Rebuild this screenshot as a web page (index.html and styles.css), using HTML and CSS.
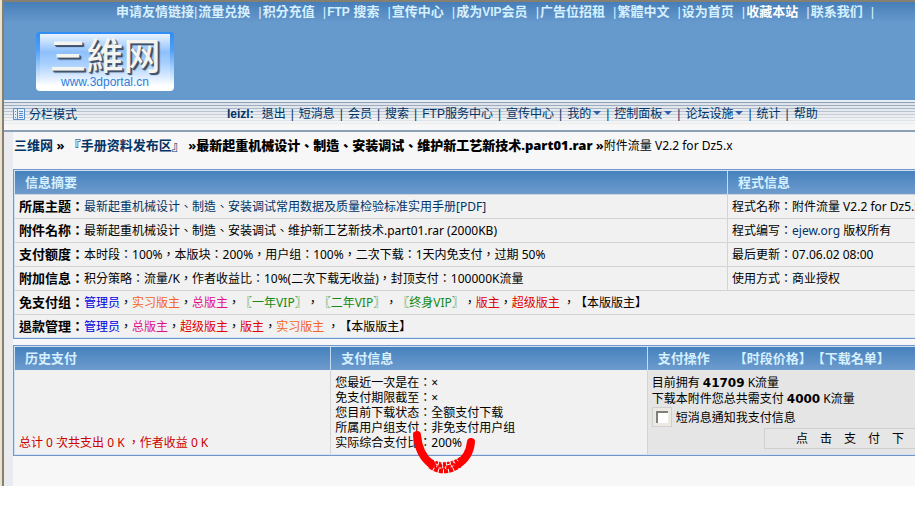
FILE: index.html
```html
<!DOCTYPE html>
<html lang="zh-Hant">
<head>
	<meta charset="UTF-8">
	<title>三维网 - 附件流量</title>
	<link rel="stylesheet" href="styles.css">
</head>
<body>
<div id="page">
	<div id="header">
		<ul class="topnav">
			<li><a class="tight" href="#">申请友情链接</a>|</li>
			<li><a href="#">流量兑换</a>|</li>
			<li><a href="#">积分充值</a>|</li>
			<li><a href="#"><span>FTP</span> 搜索</a>|</li>
			<li><a href="#">宣传中心</a>|</li>
			<li><a href="#">成为<span>VIP</span>会员</a>|</li>
			<li><a href="#">广告位招租</a>|</li>
			<li><a href="#">繁體中文</a>|</li>
			<li><a href="#">设为首页</a>|</li>
			<li><a class="on" href="#">收藏本站</a>|</li>
			<li><a href="#">联系我们</a>|</li>
		</ul>
		<a class="logo" href="#">
			<span class="logo-name">三維网</span>
			<span class="logo-url">www.3dportal.cn</span>
		</a>
	</div>
	<div id="menu">
		<a class="mode" href="#">
			<svg width="12" height="12" viewBox="0 0 12 12">
				<path d="M0.5 0.5h11v11h-11z" fill="#e4eefa" stroke="#5c8fca"/>
				<path d="M4.5 0v12" stroke="#5c8fca"/>
				<path d="M2 3.5h1M2 6.5h1M2 9.5h1M6 3.5h4M6 5.5h4M6 7.5h4M6 9.5h4" stroke="#5c8fca"/>
			</svg>
			分栏模式
		</a>
		<ul class="menu-list">
			<li><b>leizl:</b></li>
			<li><a href="#">退出</a></li>
			<li>|</li>
			<li><a href="#">短消息</a></li>
			<li>|</li>
			<li><a href="#">会员</a></li>
			<li>|</li>
			<li><a href="#">搜索</a></li>
			<li>|</li>
			<li><a href="#">FTP服务中心</a></li>
			<li>|</li>
			<li><a href="#">宣传中心</a></li>
			<li>|</li>
			<li><a class="drop" href="#">我的</a></li>
			<li>|</li>
			<li><a class="drop" href="#">控制面板</a></li>
			<li>|</li>
			<li><a class="drop" href="#">论坛设施</a></li>
			<li>|</li>
			<li><a href="#">统计</a></li>
			<li>|</li>
			<li><a href="#">帮助</a></li>
		</ul>
	</div>
	<div id="main">
		<div class="nav"><a href="#">三维网</a> » <a href="#">『手册资料发布区』</a> »<b>最新起重机械设计、制造、安装调试、维护新工艺新技术.part01.rar</b> »<span>附件流量 V2.2 for Dz5.x</span></div>

		<table class="box info">
			<thead>
				<tr><th>信息摘要</th><th class="side">程式信息</th></tr>
			</thead>
			<tbody>
				<tr>
					<td><b>所属主题：</b><a href="#">最新起重机械设计、制造、安装调试常用数据及质量检验标准实用手册[PDF]</a></td>
					<td>程式名称：附件流量 V2.2 for Dz5.x</td>
				</tr>
				<tr>
					<td><b>附件名称：</b>最新起重机械设计、制造、安装调试、维护新工艺新技术.part01.rar (2000KB)</td>
					<td>程式编写：<a href="#">ejew.org</a> 版权所有</td>
				</tr>
				<tr>
					<td><b>支付额度：</b>本时段：100%，本版块：200%，用户组：100%，二次下载：1天内免支付，过期 50%</td>
					<td>最后更新：07.06.02 08:00</td>
				</tr>
				<tr>
					<td><b>附加信息：</b>积分策略：流量/K，作者收益比：10%(二次下载无收益)，封顶支付：100000K流量</td>
					<td>使用方式：商业授权</td>
				</tr>
				<tr>
					<td colspan="2"><b>免支付组：</b><span class="blue">管理员</span>，<span class="orange">实习版主</span>，<span class="pink">总版主</span>，<span class="green">〖一年VIP〗</span>，<span class="green">〖二年VIP〗</span>，<span class="green">〖终身VIP〗</span>，<span class="red">版主</span>，<span class="red">超级版主</span> ，【本版版主】</td>
				</tr>
				<tr>
					<td colspan="2"><b>退款管理：</b><span class="blue">管理员</span>，<span class="pink">总版主</span>，<span class="red">超级版主</span>，<span class="red">版主</span>，<span class="orange">实习版主</span> ，【本版版主】</td>
				</tr>
			</tbody>
		</table>

		<table class="box pay">
			<thead>
				<tr>
					<th>历史支付</th>
					<th>支付信息</th>
					<th>支付操作<span class="ops"><a href="#">【时段价格】</a><a href="#">【下载名单】</a></span></th>
				</tr>
			</thead>
			<tbody>
				<tr>
					<td class="total">总计 0 次共支出 0 K ，作者收益 0 K</td>
					<td>
						<div>您最近一次是在：×</div>
						<div>免支付期限截至：×</div>
						<div>您目前下载状态：全额支付下载</div>
						<div>所属用户组支付：非免支付用户组</div>
						<div class="rate">实际综合支付比：200%
							<svg class="mark" width="64" height="46" viewBox="0 0 64 46">
								<path d="M5 5C6 17 10 27 19 34" stroke-width="8"/>
								<path d="M59 12C58 22 54 29 46 34" stroke-width="8"/>
								<path d="M16 29C25 36 39 36 50 28" stroke-width="4" stroke-dasharray="3 1"/>
								<path d="M17 33C26 39 40 39 50 31" stroke-width="4" stroke-dasharray="5 1 2 1"/>
								<path d="M18 36C27 43 39 42 48 35" stroke-width="5" stroke-dasharray="4 1"/>
								<path class="gap" d="M24 34l2 1M29 32l1 2M35 35l3 -1M41 32l2 1M27 38l2 0M33 38l1 1M39 37l2 -1M22 30l1 1M37 31l1 1M45 30l1 1"/>
							</svg>
						</div>
					</td>
					<td class="action">
						<div>目前拥有 <b>41709</b> K流量</div>
						<div>下载本附件您总共需支付 <b>4000</b> K流量</div>
						<label><input type="checkbox">短消息通知我支付信息</label>
						<button type="button">点　击　支　付　下　载</button>
					</td>
				</tr>
			</tbody>
		</table>
	</div>
</div>
</body>
</html>
```
FILE: styles.css
```css
body,ul,li{
	margin:0;
	padding:0;
}
li{
	list-style:none;
}
a{
	color:#003366;
	text-decoration:none;
}
body{
	background:#fff;
	color:#000;
	font:12px/15px "Noto Sans","Noto Sans CJK TC",sans-serif;
	text-spacing-trim:space-all;
	overflow-x:hidden;
}

#page{
	min-width:970px;
	border-top:2px solid #a3937c;
	border-left:4px solid #807c70;
	border-image:linear-gradient(to right,#e9e3cf 2px,#85806f 2px) 2 0 0 4;
	white-space:nowrap;
}

#header{
	height:98px;
	background:linear-gradient(#477eb9,#6699cc 20px);
}
.topnav{
	display:flex;
	justify-content:center;
	gap:1px;
	padding:2px 0 0 12px;
	font:bold 13px/15px "Liberation Sans","Noto Sans CJK TC",sans-serif;
	color:#d5f0ff;
}
.topnav li{
	font-weight:normal;
}
.topnav a{
	margin-right:8px;
	font-weight:bold;
	color:#d5f0ff;
}
.topnav span{
	font-size:12px;
}
.topnav .tight{
	margin-right:0;
}
.topnav .on{
	color:#fff;
}

.logo{
	display:flex;
	flex-direction:column;
	align-items:center;
	box-sizing:border-box;
	width:138px;
	height:59px;
	margin:12px 0 0 32px;
	border-radius:4px;
	background:
		linear-gradient(#eaf4ff,#8fc0fb 18px,#a9d0ff 30px,#fff 52px) 4px 2px/130px 57px no-repeat,
		linear-gradient(#2f8df5,#4f9ff7 18px,#fff 54px);
}
.logo-name{
	font:500 37px/44px "Noto Sans CJK TC",sans-serif;
	color:#f4f4f0;
	text-shadow:1px 1px 0 #4a5a70,2px 2px 1px #32435a;
}
.logo-url{
	font:12px/13px "Liberation Sans",sans-serif;
	color:#2f7fd8;
}

#menu{
	display:flex;
	align-items:center;
	box-sizing:border-box;
	height:32px;
	padding:0 9px 4px;
	border-top:2px solid #e6edf5;
	border-bottom:2px solid #8ba0b4;
	background:
		linear-gradient(rgba(247,247,247,0),#f7f7f7 24px),
		repeating-linear-gradient(#8c9fb4 0,#8c9fb4 1px,#dce3ea 1px,#dce3ea 3px);
	color:#003366;
}
.mode{
	display:flex;
	align-items:center;
	gap:4px;
	width:208px;
}
.menu-list{
	display:flex;
	gap:5px;
	margin-left:6px;
	font-family:"Liberation Sans","Noto Sans CJK TC",sans-serif;
}
.menu-list b{
	margin-right:3px;
}
.drop::after{
	content:"";
	display:inline-block;
	margin-left:2px;
	border:4px solid transparent;
	border-top-color:#2d5cab;
	border-bottom:0;
	vertical-align:3px;
}

#main{
	padding:5px 10px 30px 0;
	border-left:9px solid #e9ebef;
	background:#f7f7f7;
}
.nav{
	padding-left:1px;
	font-size:13px;
	font-weight:bold;
	line-height:16px;
}
.nav span{
	font-size:12px;
	font-weight:normal;
}

.box{
	width:100%;
	border:1px solid #7396ca;
	border-spacing:0;
	outline:1px solid #cfe2f6;
	outline-offset:-2px;
	table-layout:fixed;
	background:#f1f1f1;
}
.box th{
	height:24px;
	padding:0 0 0 10px;
	border-left:1px solid #c4dcf2;
	background:linear-gradient(#4480bd,#6e9bcd);
	color:#d5f0ff;
	font-size:13px;
	text-align:left;
}
.box td{
	padding:0 0 0 4px;
	border-left:1px solid #d2d4d8;
}
.box th:first-child,
.box td:first-child{
	border-left-color:#cfe2f6;
}

.info{
	margin-top:15px;
}
.info .side{
	width:225px;
}
.info td{
	height:23px;
	border-top:1px solid #d2d4d8;
}
.info td b{
	font-size:13px;
}
.blue{ color:#0000e0; }
.orange{ color:#f26522; }
.pink{ color:#e0108c; }
.green{ color:#158a15; }
.red{ color:#e00000; }

.pay{
	margin-top:6px;
}
.pay td{
	padding-top:5px;
	padding-bottom:5px;
	vertical-align:top;
}
.pay .total{
	color:#cc0000;
	vertical-align:bottom;
}
.ops{
	margin-left:24px;
}
.ops a{
	color:#d5f0ff;
}
.rate{
	position:relative;
}
.mark{
	position:absolute;
	left:77px;
	top:-5px;
	fill:none;
	stroke:#f00;
	stroke-linecap:round;
}
.mark path[stroke-dasharray]{
	stroke-linecap:butt;
}
.mark .gap{
	stroke:#f7f7f7;
	stroke-width:1;
}

.pay .action{
	padding-right:3px;
	background:#e5e5e5;
}
.action b{
	font-family:"DejaVu Sans",sans-serif;
}
.action label{
	display:flex;
	align-items:center;
	gap:4px;
}
.action input{
	appearance:none;
	box-sizing:border-box;
	width:20px;
	height:20px;
	margin:0;
	border:1px solid #d0d0d0;
	background:
		linear-gradient(#fff,#fff) 5px 5px/10px 10px no-repeat,
		linear-gradient(#808078,#808078) 3px 3px/12px 12px no-repeat,
		#ece9e2;
}
.action button{
	display:block;
	width:196px;
	height:21px;
	margin:1px 0 0 auto;
	padding:0;
	border:1px solid #cfcfcf;
	background:#e6e6e6;
	color:#000;
	font:inherit;
}
```
